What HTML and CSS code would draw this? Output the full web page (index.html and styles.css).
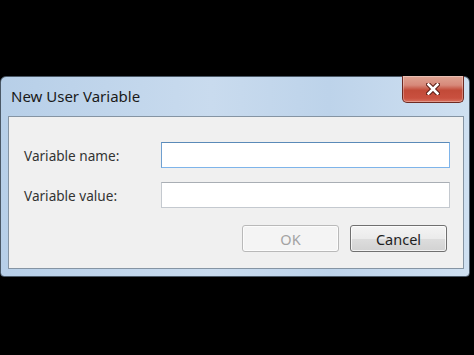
FILE: index.html
```html
<!DOCTYPE html>
<html lang="en">
<head>
  <meta charset="UTF-8">
  <meta name="viewport" content="width=device-width, initial-scale=1.0">
  <title>New User Variable</title>
  <link rel="stylesheet" href="styles.css">
</head>
<body>
  <div class="dialog">
    <div class="titlebar">
      <span class="title">New User Variable</span>
      <button class="close-btn" aria-label="Close">
        <svg width="14" height="12" viewBox="0 0 14 12">
          <path d="M2.5 1.5 L11.5 10.5 M11.5 1.5 L2.5 10.5" stroke="#5a1a12" stroke-width="4.6" stroke-linecap="square"/>
          <path d="M2.5 1.5 L11.5 10.5 M11.5 1.5 L2.5 10.5" stroke="#ffffff" stroke-width="2.6" stroke-linecap="square"/>
        </svg>
      </button>
    </div>

    <div class="client">
      <div class="row">
        <label for="var-name">Variable name:</label>
        <input id="var-name" class="field focused" type="text">
      </div>
      <div class="row">
        <label for="var-value">Variable value:</label>
        <input id="var-value" class="field" type="text">
      </div>

      <div class="actions">
        <button class="btn" disabled>OK</button>
        <button class="btn default">Cancel</button>
      </div>
    </div>
  </div>
</body>
</html>
```

FILE: styles.css
```css
* {
  margin: 0;
  padding: 0;
  box-sizing: border-box;
}

body {
  background: #000;
  font-family: "Noto Sans", "Open Sans", sans-serif;
  padding-top: 76px;
  height: 355px;
  overflow: hidden;
}

.dialog {
  width: 470px;
  height: 201px;
  background: linear-gradient(90deg, #b7cfe8 0%, #c9dbee 45%, #bdd3ea 70%, #cfe0f1 100%);
  border: 1px solid #4a5866;
  border-radius: 6px 6px 4px 4px;
  padding: 0 5px 7px 7px;
  display: flex;
  flex-direction: column;
}

.titlebar {
  height: 39px;
  display: flex;
  align-items: flex-start;
  justify-content: space-between;
}

.title {
  font-size: 15px;
  color: #1a1a1a;
  margin: 9px 0 0 3px;
}

.close-btn {
  width: 62px;
  height: 27px;
  margin-top: -1px;
  border: 1px solid #6e2a22;
  border-top: none;
  border-radius: 0 0 5px 5px;
  background: linear-gradient(180deg, #dfa493 0%, #d7897a 35%, #c24a38 55%, #c9503f 85%, #d8705e 100%);
  display: flex;
  align-items: center;
  justify-content: center;
  box-shadow: inset 0 0 0 1px rgba(255, 255, 255, 0.3);
}

.client {
  flex: 1;
  background: #f0f0f0;
  border: 1px solid #8594a3;
  padding: 25px 13px 16px 15px;
  display: flex;
  flex-direction: column;
}

.row {
  display: flex;
  align-items: center;
  justify-content: space-between;
  height: 26px;
}

.row + .row {
  margin-top: 14px;
}

.row label {
  font-size: 13.6px;
  color: #333;
}

.field {
  width: 289px;
  height: 26px;
  background: #fff;
  border: 1px solid #c4c9cf;
  border-top-color: #a9aeb4;
  outline: none;
}

.field.focused {
  border-color: #7eb4ea;
  border-top-color: #5a8ab8;
  border-left-color: #6f9fcf;
}

.actions {
  margin-top: auto;
  display: flex;
  justify-content: flex-end;
  gap: 11px;
  padding-right: 3px;
}

.btn {
  width: 97px;
  height: 27px;
  border-radius: 3px;
  font-family: inherit;
  font-size: 14.5px;
  color: #1e1e1e;
  border: 1px solid #707070;
  background: linear-gradient(180deg, #f4f4f4 0%, #ebebeb 50%, #dddddd 51%, #d2d2d2 100%);
  box-shadow: inset 0 0 0 1px rgba(255, 255, 255, 0.7);
}

.btn:disabled {
  color: #a3a3a3;
  border-color: #b9b9b9;
  background: #f4f4f4;
}
```
